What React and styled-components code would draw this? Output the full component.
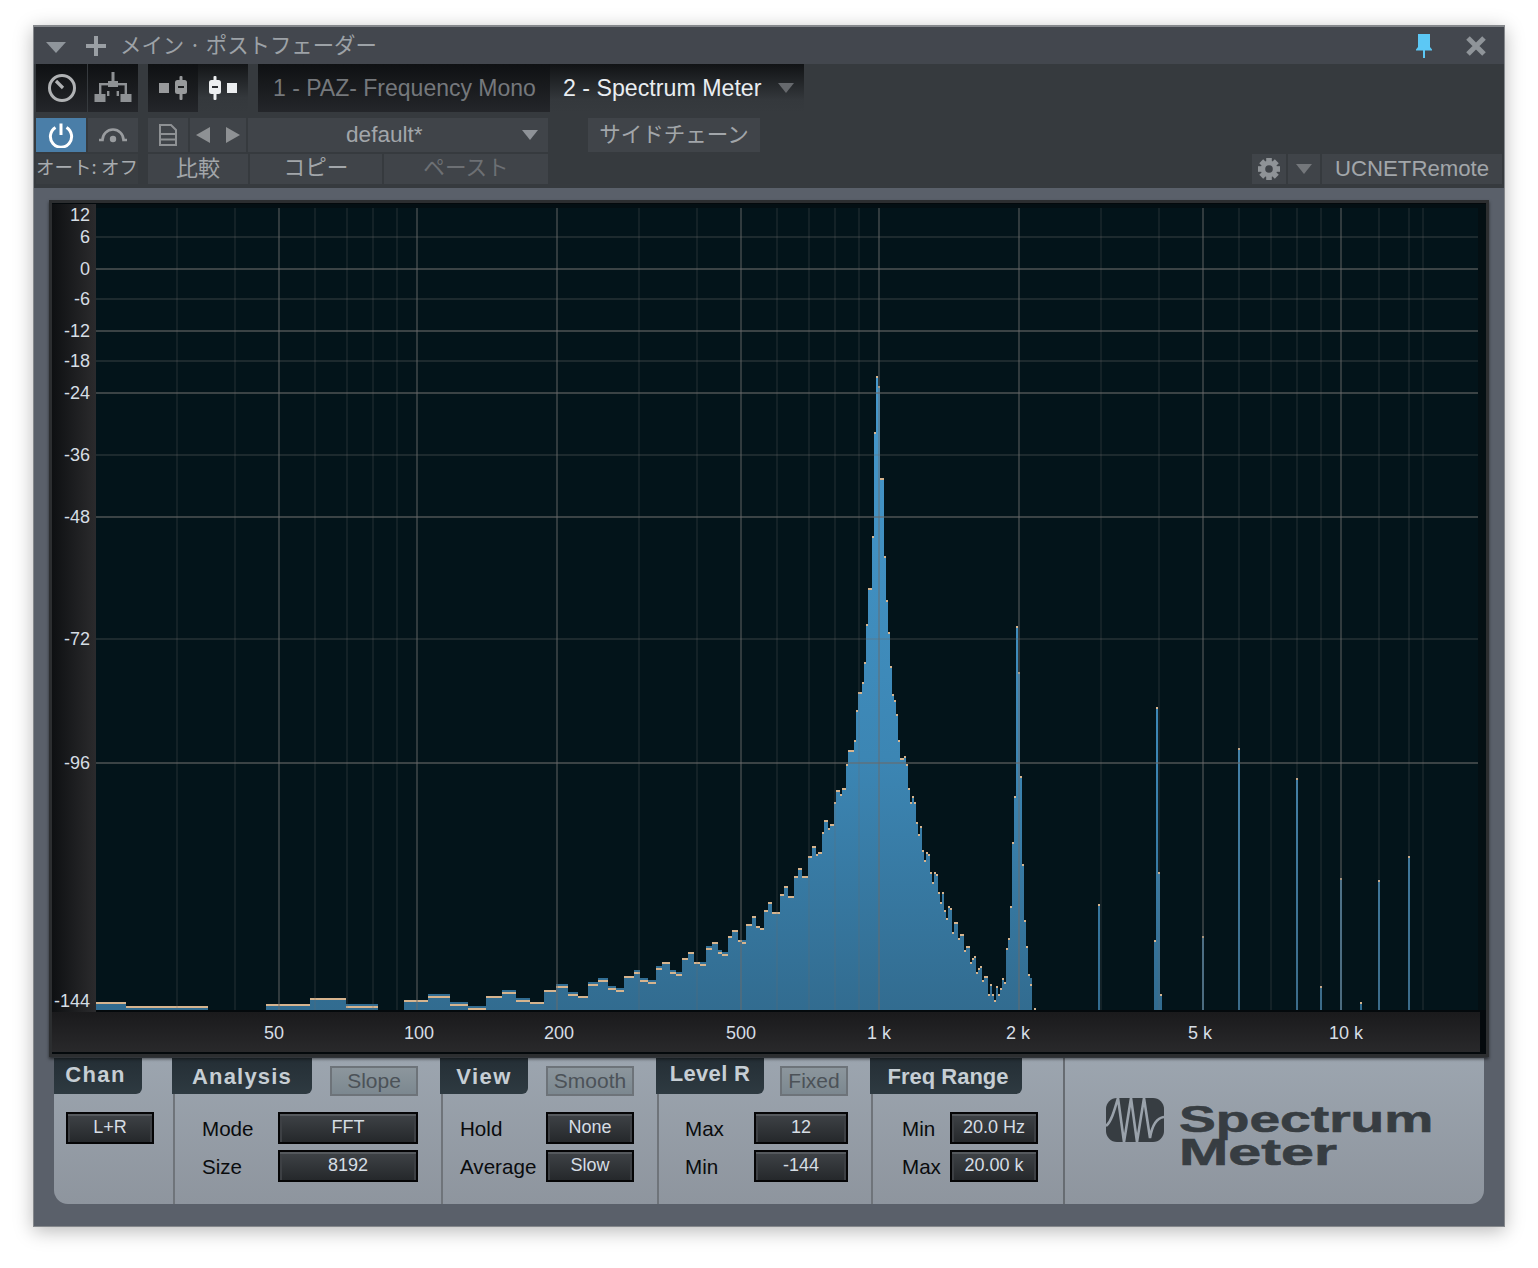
import React from "react";
import styled, { createGlobalStyle } from "styled-components";

const GlobalStyle = createGlobalStyle`
  html, body {
    margin: 0;
    padding: 0;
    background: #fff;
  }
  body {
    font-family: "Liberation Sans", "Noto Sans CJK JP", sans-serif;
  }
`;

const JP = `"Noto Sans CJK JP", "Liberation Sans", sans-serif`;

const Page = styled.div`
  width: 1538px;
  height: 1268px;
  padding: 25px 0 0 33px;
  box-sizing: border-box;
`;

const Window = styled.div`
  width: 1472px;
  height: 1202px;
  box-sizing: border-box;
  border: 1px solid #85888c;
  border-top-width: 2px;
  display: flex;
  flex-direction: column;
  background: #5a606a;
  box-shadow: 0 4px 18px rgba(0, 0, 0, 0.28);
`;

const TitleBar = styled.div`
  height: 37px;
  flex: none;
  display: flex;
  align-items: center;
  background: #43474e;
  padding: 0 18px 0 12px;
`;

const TitleText = styled.span`
  margin-left: 14px;
  padding-bottom: 4px;
  font: 21.4px ${JP};
  color: #9da2a7;
  flex: 1;
  white-space: pre;
`;

const TitleIcon = styled.svg`
  display: block;
  flex: none;
  margin-left: ${(p) => p.$ml || 0}px;
  margin-top: ${(p) => p.$mt || 0}px;
`;

const Tri = styled.svg`
  display: block;
  flex: none;
`;

const Toolbar = styled.div`
  height: 124px;
  flex: none;
  box-sizing: border-box;
  background: #363a3e;
  padding: 0 2px 4px 2px;
  display: flex;
  flex-direction: column;
`;

const Row = styled.div`
  display: flex;
  height: ${(p) => p.$h}px;
  margin-top: ${(p) => p.$mt || 0}px;
  gap: 2px;
  flex: none;
`;

const DarkCell = styled.div`
  width: ${(p) => p.$w}px;
  flex: none;
  display: flex;
  align-items: center;
  justify-content: center;
  gap: 6px;
  background: ${(p) =>
    p.$active
      ? "linear-gradient(#131517, #34383c 70%, #363a3e)"
      : "linear-gradient(#0f1113, #24262a)"};
  margin-left: ${(p) => p.$ml || 0}px;
`;

const TabDark = styled.div`
  width: 292px;
  margin-left: 8px;
  flex: none;
  box-sizing: border-box;
  padding: 0 0 0 15px;
  display: flex;
  align-items: center;
  background: linear-gradient(#0f1113, #24262a);
  font-size: 23px;
  color: #75787c;
  white-space: nowrap;
`;

const TabActive = styled.div`
  width: 254px;
  flex: none;
  box-sizing: border-box;
  padding: 0 10px 0 13px;
  margin-left: -2px;
  display: flex;
  align-items: center;
  justify-content: space-between;
  background: linear-gradient(#111315, #34383c 75%, #363a3e);
  font-size: 23.2px;
  color: #e9edf1;
  white-space: nowrap;
`;

const Cell = styled.div`
  width: ${(p) => p.$w}px;
  flex: none;
  box-sizing: border-box;
  display: flex;
  align-items: center;
  justify-content: center;
  gap: ${(p) => p.$gap || 0}px;
  margin-left: ${(p) => p.$ml || 0}px;
  padding-bottom: ${(p) => p.$up || 0}px;
  background: ${(p) => p.$bg || "#404449"};
  font: ${(p) => p.$size || 22}px ${JP};
  color: ${(p) => p.$color || "#a2a6aa"};
  white-space: nowrap;
`;

const PresetCell = styled(Cell)`
  font-family: "Liberation Sans", sans-serif;
  justify-content: space-between;
  padding: 0 10px 0 98px;
`;

const UcnetCell = styled(Cell)`
  font-family: "Liberation Sans", sans-serif;
  font-size: 22.2px;
  justify-content: flex-start;
  padding-left: 13px;
`;

const Spacer = styled.div`
  flex: 1;
`;

const Body = styled.div`
  flex: 1;
  min-height: 0;
  padding: 12px 0 0 15px;
  display: flex;
  flex-direction: column;
`;

const Display = styled.div`
  width: 1440px;
  height: 857px;
  box-sizing: border-box;
  flex: none;
  border: 3px solid #2c2e30;
  background: #04090c;
  position: relative;
  z-index: 1;
  box-shadow: 0 2px 3px rgba(0, 0, 0, 0.55);
`;

const ChartSvg = styled.svg`
  display: block;
`;

const AxisText = styled.text`
  font: 18px "Liberation Sans", sans-serif;
  fill: #d6dde4;
`;

const Panel = styled.div`
  width: 1430px;
  height: 146px;
  margin: 1px 0 0 5px;
  flex: none;
  display: flex;
  background: linear-gradient(#9ca5af, #8e959e);
  border-radius: 0 0 14px 14px;
  overflow: hidden;
`;

const Section = styled.div`
  width: ${(p) => p.$w}px;
  flex: none;
  display: flex;
  flex-direction: column;
`;

const Head = styled.div`
  height: 36px;
  flex: none;
  display: flex;
  gap: ${(p) => p.$gap || 0}px;
`;

const Tab = styled.div`
  width: ${(p) => p.$w}px;
  flex: none;
  box-sizing: border-box;
  padding-top: ${(p) => p.$pt ?? 1}px;
  padding-left: ${(p) => p.$pl ?? 0}px;
  padding-right: ${(p) => p.$pr ?? 0}px;
  padding-bottom: ${(p) => p.$pb ?? 0}px;
  display: flex;
  align-items: center;
  justify-content: center;
  background: linear-gradient(#242e35, #2e3a41);
  border-radius: 0 0 6px 0;
  color: #c6ced4;
  font-size: 22px;
  font-weight: bold;
  letter-spacing: ${(p) => p.$ls ?? 1}px;
`;

const Toggle = styled.div`
  width: ${(p) => p.$w}px;
  height: 30px;
  margin-top: 8px;
  box-sizing: border-box;
  flex: none;
  display: flex;
  align-items: center;
  justify-content: center;
  border: 2px solid #6d7379;
  background: linear-gradient(#8c969d, #7c8890);
  color: #4c5258;
  font-size: 21px;
`;

const Controls = styled.div`
  flex: 1;
  box-sizing: border-box;
  margin-left: ${(p) => (p.$first ? 0 : 1)}px;
  padding: 18px 0 0 ${(p) => p.$pl}px;
  border-left: ${(p) => (p.$first ? "none" : "2px solid #6f747a")};
  display: grid;
  grid-template-columns: ${(p) => p.$cols};
  grid-auto-rows: 32px;
  row-gap: 6px;
  align-content: start;
`;

const Label = styled.div`
  display: flex;
  align-items: center;
  color: #0a0c0e;
  font-size: 20.6px;
  padding-top: 2px;
`;

const Value = styled.div`
  box-sizing: border-box;
  border: 2px solid #050506;
  display: flex;
  align-items: center;
  justify-content: center;
  padding-bottom: 1px;
  background: linear-gradient(#3f4347, #25282b);
  box-shadow: inset 0 2px 0 #55595d, inset 2px 0 0 #3d4044, inset -2px 0 0 #3d4044;
  color: #d6dde4;
  font-size: 18px;
`;

const LogoSection = styled.div`
  flex: 1;
  display: flex;
  border-left: 2px solid #676c72;
  padding: 40px 0 0 41px;
  gap: 15px;
`;

const LogoText = styled.div`
  margin-top: 5px;
`;

const LogoLine = styled.div`
  color: #373d42;
  font-weight: bold;
  font-size: 37px;
  line-height: 33px;
  transform-origin: left top;
  transform: scaleX(${(p) => p.$scale});
  -webkit-text-stroke: 0.6px #373d42;
`;

// fixed bins of the analyser, given as [width, top y, hold offset]
const run = (start, bins) => {
  let x = start;
  return bins.map(([w, top, off = 0]) => {
    const bar = { x, w, top, off };
    x += w;
    return bar;
  });
};

const BARS = [
  ...run(96, [[30, 1002]]),
  ...run(126, [[82, 1006]]),
  ...run(266, [[44, 1004], [36, 998], [32, 1004, 2]]),
  ...run(404, [
    [24, 1000], [22, 994, 2], [18, 1002, 2], [18, 1006, 2], [16, 996], [14, 990, 2],
    [14, 998, 2], [14, 1002], [12, 990], [12, 984, 2], [10, 992, 2], [10, 996], [10, 982, 2],
    [10, 978, 2], [8, 986, 2], [8, 988, 2], [10, 976], [6, 970, 2], [8, 978, 2], [8, 980, 2],
    [6, 966, 2], [8, 962], [6, 970, 2], [6, 972, 2], [6, 958], [6, 952], [6, 962], [6, 962, 2],
    [6, 946, 2], [6, 942], [4, 950, 2], [6, 952, 2], [4, 936], [6, 930], [4, 940], [4, 940, 2],
    [6, 924], [4, 916], [4, 926], [4, 928], [4, 910], [4, 902], [8, 912], [4, 894], [4, 886],
    [6, 896], [4, 876], [4, 868], [6, 876], [4, 856], [4, 846], [2, 854], [4, 852], [2, 832],
    [4, 820], [2, 828], [4, 824], [2, 802], [4, 790], [2, 794], [4, 788], [2, 764], [6, 750],
    [2, 740], [2, 710], [4, 692], [2, 682], [2, 662], [2, 624], [4, 588], [2, 536], [2, 432],
    [2, 376], [2, 386], [4, 478], [2, 556], [2, 600], [2, 632], [2, 666], [2, 694], [2, 700],
    [2, 714], [2, 740], [4, 758], [2, 756], [2, 764], [2, 788], [2, 802], [2, 796], [2, 802],
    [2, 822], [2, 834], [2, 826], [2, 850], [2, 860], [2, 852], [2, 854], [2, 872], [2, 882],
    [2, 872], [2, 874], [2, 892], [2, 902], [2, 892], [2, 910], [2, 918], [2, 906], [2, 908],
    [2, 932], [4, 922], [2, 938], [4, 934], [2, 950], [4, 946], [2, 962], [2, 958], [2, 956],
    [2, 972], [2, 968], [2, 966], [2, 980], [4, 976], [2, 994], [2, 984], [2, 994], [2, 1000],
    [2, 986], [2, 994], [2, 988], [2, 978], [2, 982], [2, 948], [2, 938], [2, 906], [2, 842],
    [2, 796], [2, 626], [2, 672], [2, 776], [2, 864], [2, 920], [2, 946], [2, 974], [2, 978, 6],
  ]),
  ...run(1034, [[2, 1008]]),
  ...run(1098, [[2, 904]]),
  ...run(1154, [[2, 940], [2, 707], [2, 872], [2, 994]]),
  ...run(1202, [[2, 936]]),
  ...run(1238, [[2, 748]]),
  ...run(1296, [[2, 778]]),
  ...run(1320, [[2, 986]]),
  ...run(1340, [[2, 878]]),
  ...run(1360, [[2, 1002]]),
  ...run(1378, [[2, 880]]),
  ...run(1408, [[2, 856]]),
];

const BRIGHT_V = [279, 417, 557, 741, 879, 1019, 1203, 1341];
const DIM_V = [177, 235, 315, 347, 373, 397, 639, 697, 777, 809, 835, 859, 1101, 1159, 1239, 1271, 1297, 1321, 1379, 1409, 1423];
const BRIGHT_H = [269, 331, 393, 517, 763];
const DIM_H = [237, 299, 361, 455, 639];

const LEVELS = [
  ["12", 215], ["6", 237], ["0", 269], ["-6", 299], ["-12", 331], ["-18", 361], ["-24", 393],
  ["-36", 455], ["-48", 517], ["-72", 639], ["-96", 763], ["-144", 1001],
];
const FREQS = [
  ["50", 274], ["100", 419], ["200", 559], ["500", 741], ["1 k", 879], ["2 k", 1018], ["5 k", 1200], ["10 k", 1346],
];

const GRID = "#6a6a6a";

const Spectrum = () => (
  <ChartSvg width="1434" height="851" viewBox="52 203 1434 851">
    <defs>
      <linearGradient id="axisLeft" x1="0" x2="1" y1="0" y2="0">
        <stop offset="0" stopColor="#0e1012" />
        <stop offset="1" stopColor="#2b2b2d" />
      </linearGradient>
      <linearGradient id="axisBottom" x1="0" x2="0" y1="0" y2="1">
        <stop offset="0" stopColor="#1a1a1c" />
        <stop offset="1" stopColor="#29292b" />
      </linearGradient>
      <linearGradient id="barFill" gradientUnits="userSpaceOnUse" x1="0" x2="0" y1="376" y2="1010">
        <stop offset="0" stopColor="#4598cc" />
        <stop offset="0.6" stopColor="#3c86b4" />
        <stop offset="1" stopColor="#326c90" />
      </linearGradient>
    </defs>
    <rect x="52" y="203" width="1434" height="851" fill="#04090c" />
    <rect x="96" y="204" width="1390" height="806" fill="#040f13" />
    <rect x="96" y="208" width="1382" height="802" fill="#03141a" />
    <rect x="52" y="204" width="44" height="808" fill="url(#axisLeft)" />
    <rect x="52" y="1012" width="1428" height="40" fill="url(#axisBottom)" />

    {BARS.map((b) => (
      <rect key={b.x} x={b.x} y={b.top} width={b.w} height={1010 - b.top} fill="url(#barFill)" />
    ))}
    {BARS.map((b) => (
      <rect key={b.x} x={b.x} y={b.top + b.off} width={b.w} height="2" fill="#d6b48e" />
    ))}
    {DIM_V.map((x) => (
      <rect key={x} x={x - 1} y="208" width="2" height="802" fill={GRID} opacity="0.17" />
    ))}
    {BRIGHT_V.map((x) => (
      <rect key={x} x={x - 1} y="208" width="2" height="802" fill={GRID} opacity="0.45" />
    ))}
    {DIM_H.map((y) => (
      <rect key={y} x="96" y={y - 1} width="1382" height="2" fill={GRID} opacity="0.25" />
    ))}
    {BRIGHT_H.map((y) => (
      <rect key={y} x="96" y={y - 1} width="1382" height="2" fill={GRID} opacity="0.55" />
    ))}

    {LEVELS.map(([t, y]) => (
      <AxisText key={t} x="90" y={y + 6} textAnchor="end">{t}</AxisText>
    ))}
    {FREQS.map(([t, x]) => (
      <AxisText key={t} x={x} y="1039" textAnchor="middle">{t}</AxisText>
    ))}
  </ChartSvg>
);

const TriangleDown = ({ w = 16, h = 10, color = "#8e9297" }) => (
  <Tri width={w} height={h} viewBox="0 0 16 10" preserveAspectRatio="none">
    <polygon points="0,0 16,0 8,10" fill={color} />
  </Tri>
);

const Knob = () => (
  <svg width="30" height="30" viewBox="0 0 30 30">
    <circle cx="15" cy="15" r="12.5" fill="none" stroke="#b0b2b4" strokeWidth="3" />
    <line x1="9" y1="8" x2="16" y2="15" stroke="#b0b2b4" strokeWidth="3.2" />
  </svg>
);

const Routing = () => (
  <svg width="38" height="32" viewBox="0 0 38 32" fill="#8e9194">
    <rect x="17.5" y="0" width="3" height="11" />
    <rect x="14" y="9" width="10" height="6" />
    <rect x="5" y="11" width="28" height="2.4" />
    <rect x="5" y="11" width="2.4" height="13" />
    <rect x="30.6" y="11" width="2.4" height="13" />
    <rect x="0.5" y="22" width="11" height="8" />
    <rect x="26.5" y="22" width="11" height="8" />
    <rect x="13" y="19" width="2.4" height="5" />
    <rect x="22.6" y="19" width="2.4" height="5" />
  </svg>
);

const Fader = ({ color, cut }) => (
  <svg width="12" height="24" viewBox="0 0 12 24">
    <rect x="4.5" y="0" width="3" height="24" rx="1" fill={color} />
    <rect x="0" y="4" width="12" height="14" rx="2.5" fill={color} />
    <rect x="3" y="10" width="6" height="2" fill={cut} />
  </svg>
);

const Square = ({ color }) => (
  <svg width="10" height="10" viewBox="0 0 10 10">
    <rect width="10" height="10" fill={color} />
  </svg>
);

const Power = () => (
  <svg width="26" height="26" viewBox="0 0 26 26" fill="none" stroke="#fff" strokeWidth="3">
    <path d="M7.5 5.5a10.6 10.6 0 1 0 11 0" />
    <line x1="13" y1="1.5" x2="13" y2="13" />
  </svg>
);

const Bypass = () => (
  <svg width="32" height="16" viewBox="0 0 32 16" fill="none" stroke="#999c9f" strokeWidth="2.6">
    <path d="M2 13h3.500a10.500 10.500 0 0 1 21 0H30" />
    <circle cx="16" cy="12" r="3.200" fill="#999c9f" stroke="none" />
  </svg>
);

const Doc = () => (
  <svg width="18" height="22" viewBox="0 0 18 22" fill="none" stroke="#8e9194" strokeWidth="2">
    <path d="M1 1h11l5 5v15H1z" />
    <path d="M1 10h16M1 15.500h16" />
  </svg>
);

const ArrowL = () => (
  <svg width="14" height="16" viewBox="0 0 14 16">
    <polygon points="14,0 14,16 0,8" fill="#8e9194" />
  </svg>
);

const ArrowR = () => (
  <svg width="14" height="16" viewBox="0 0 14 16">
    <polygon points="0,0 0,16 14,8" fill="#8e9194" />
  </svg>
);

const Gear = () => (
  <svg width="22" height="22" viewBox="0 0 22 22">
    <g fill="#8f9397">
      {[0, 45, 90, 135, 180, 225, 270, 315].map((a) => (
        <rect key={a} x="8.2" y="0" width="5.6" height="5" transform={`rotate(${a} 11 11)`} />
      ))}
    </g>
    <circle cx="11" cy="11" r="6" fill="none" stroke="#8f9397" strokeWidth="4.4" />
  </svg>
);

const Logo = () => (
  <TitleIcon width="58" height="44" viewBox="0 0 58 44">
    <rect width="58" height="44" rx="11" fill="#373d42" />
    <path
      d="M0 28C5 24 8 14 12 0L18 44L25 0L31 44L38 0L44 40C46 28 50 20 58 19"
      fill="none"
      stroke="#9aa2ab"
      strokeWidth="2.6"
    />
  </TitleIcon>
);

const App = () => (
  <Page>
    <GlobalStyle />
    <Window>
      <TitleBar>
        <TitleIcon $mt={3} width="20" height="11" viewBox="0 0 20 11">
          <polygon points="0,0 20,0 10,11" fill="#8f959b" />
        </TitleIcon>
        <TitleIcon $ml={20} width="20" height="20" viewBox="0 0 20 20">
          <path d="M8 0h4v8h8v4h-8v8H8v-8H0V8h8z" fill="#9a9fa4" />
        </TitleIcon>
        <TitleText>メイン · ポストフェーダー</TitleText>
        <TitleIcon width="16" height="24" viewBox="0 0 16 24">
          <path d="M2 0h12v13l2 2.500v1H9V24H7v-7.500H0v-1L2 13z" fill="#5cc8f5" />
        </TitleIcon>
        <TitleIcon $ml={34} width="20" height="20" viewBox="0 0 20 20">
          <path d="M2 2L18 18M18 2L2 18" stroke="#8f9499" strokeWidth="5" />
        </TitleIcon>
      </TitleBar>

      <Toolbar>
        <Row $h={48}>
          <DarkCell $w={51}><Knob /></DarkCell>
          <DarkCell $w={50} $ml={-1}><Routing /></DarkCell>
          <DarkCell $w={50} $ml={8}>
            <Square color="#989a9c" />
            <Fader color="#989a9c" cut="#1c1e20" />
          </DarkCell>
          <DarkCell $w={50} $active $ml={-2}>
            <Fader color="#eceef0" cut="#2a2c30" />
            <Square color="#eceef0" />
          </DarkCell>
          <TabDark>1 - PAZ- Frequency Mono</TabDark>
          <TabActive>
            2 - Spectrum Meter
            <TriangleDown color="#66696d" />
          </TabActive>
        </Row>
        <Row $h={34} $mt={6}>
          <Cell $w={50} $bg="#4a7ea8"><Power /></Cell>
          <Cell $w={50}><Bypass /></Cell>
          <Cell $w={40} $ml={8}><Doc /></Cell>
          <Cell $w={56} $gap={16}><ArrowL /><ArrowR /></Cell>
          <PresetCell $w={300} $size={22.6}>
            default*
            <TriangleDown />
          </PresetCell>
          <Cell $w={172} $ml={38} $size={21.5} $up={6}>サイドチェーン</Cell>
        </Row>
        <Row $h={30} $mt={2}>
          <Cell $w={102} $bg="#3a3e42" $size={18.5} $color="#a8acb0" $up={6}>オート: オフ</Cell>
          <Cell $w={100} $ml={8} $size={22} $up={7}>比較</Cell>
          <Cell $w={132} $size={21.6} $up={7}>コピー</Cell>
          <Cell $w={164} $size={21.6} $color="#6d7074" $up={7}>ペースト</Cell>
          <Spacer />
          <Cell $w={34}><Gear /></Cell>
          <Cell $w={32}><TriangleDown color="#74777b" /></Cell>
          <UcnetCell $w={180}>UCNETRemote</UcnetCell>
        </Row>
      </Toolbar>

      <Body>
        <Display>
          <Spectrum />
        </Display>
        <Panel>
          <Section $w={118}>
            <Head><Tab $w={88} $pt={0} $pb={3} $pr={5} $ls={1.4}>Chan</Tab></Head>
            <Controls $first $pl={12} $cols="88px">
              <Value>L+R</Value>
            </Controls>
          </Section>
          <Section $w={268}>
            <Head $gap={18}>
              <Tab $w={140} $ls={1.2}>Analysis</Tab>
              <Toggle $w={88}>Slope</Toggle>
            </Head>
            <Controls $pl={27} $cols="76px 140px">
              <Label>Mode</Label><Value>FFT</Value>
              <Label>Size</Label><Value>8192</Value>
            </Controls>
          </Section>
          <Section $w={216}>
            <Head $gap={18}>
              <Tab $w={88} $ls={1.5}>View</Tab>
              <Toggle $w={88}>Smooth</Toggle>
            </Head>
            <Controls $pl={17} $cols="86px 88px">
              <Label>Hold</Label><Value>None</Value>
              <Label>Average</Label><Value>Slow</Value>
            </Controls>
          </Section>
          <Section $w={214}>
            <Head $gap={16}>
              <Tab $w={108} $pt={0} $pb={4} $ls={0.3}>Level R</Tab>
              <Toggle $w={68}>Fixed</Toggle>
            </Head>
            <Controls $pl={26} $cols="69px 94px">
              <Label>Max</Label><Value>12</Value>
              <Label>Min</Label><Value>-144</Value>
            </Controls>
          </Section>
          <Section $w={193}>
            <Head><Tab $w={152} $pl={4} $ls={0}>Freq Range</Tab></Head>
            <Controls $pl={29} $cols="48px 88px">
              <Label>Min</Label><Value>20.0 Hz</Value>
              <Label>Max</Label><Value>20.00 k</Value>
            </Controls>
          </Section>
          <LogoSection>
            <Logo />
            <LogoText>
              <LogoLine $scale={1.49}>Spectrum</LogoLine>
              <LogoLine $scale={1.6}>Meter</LogoLine>
            </LogoText>
          </LogoSection>
        </Panel>
      </Body>
    </Window>
  </Page>
);

export default App;
